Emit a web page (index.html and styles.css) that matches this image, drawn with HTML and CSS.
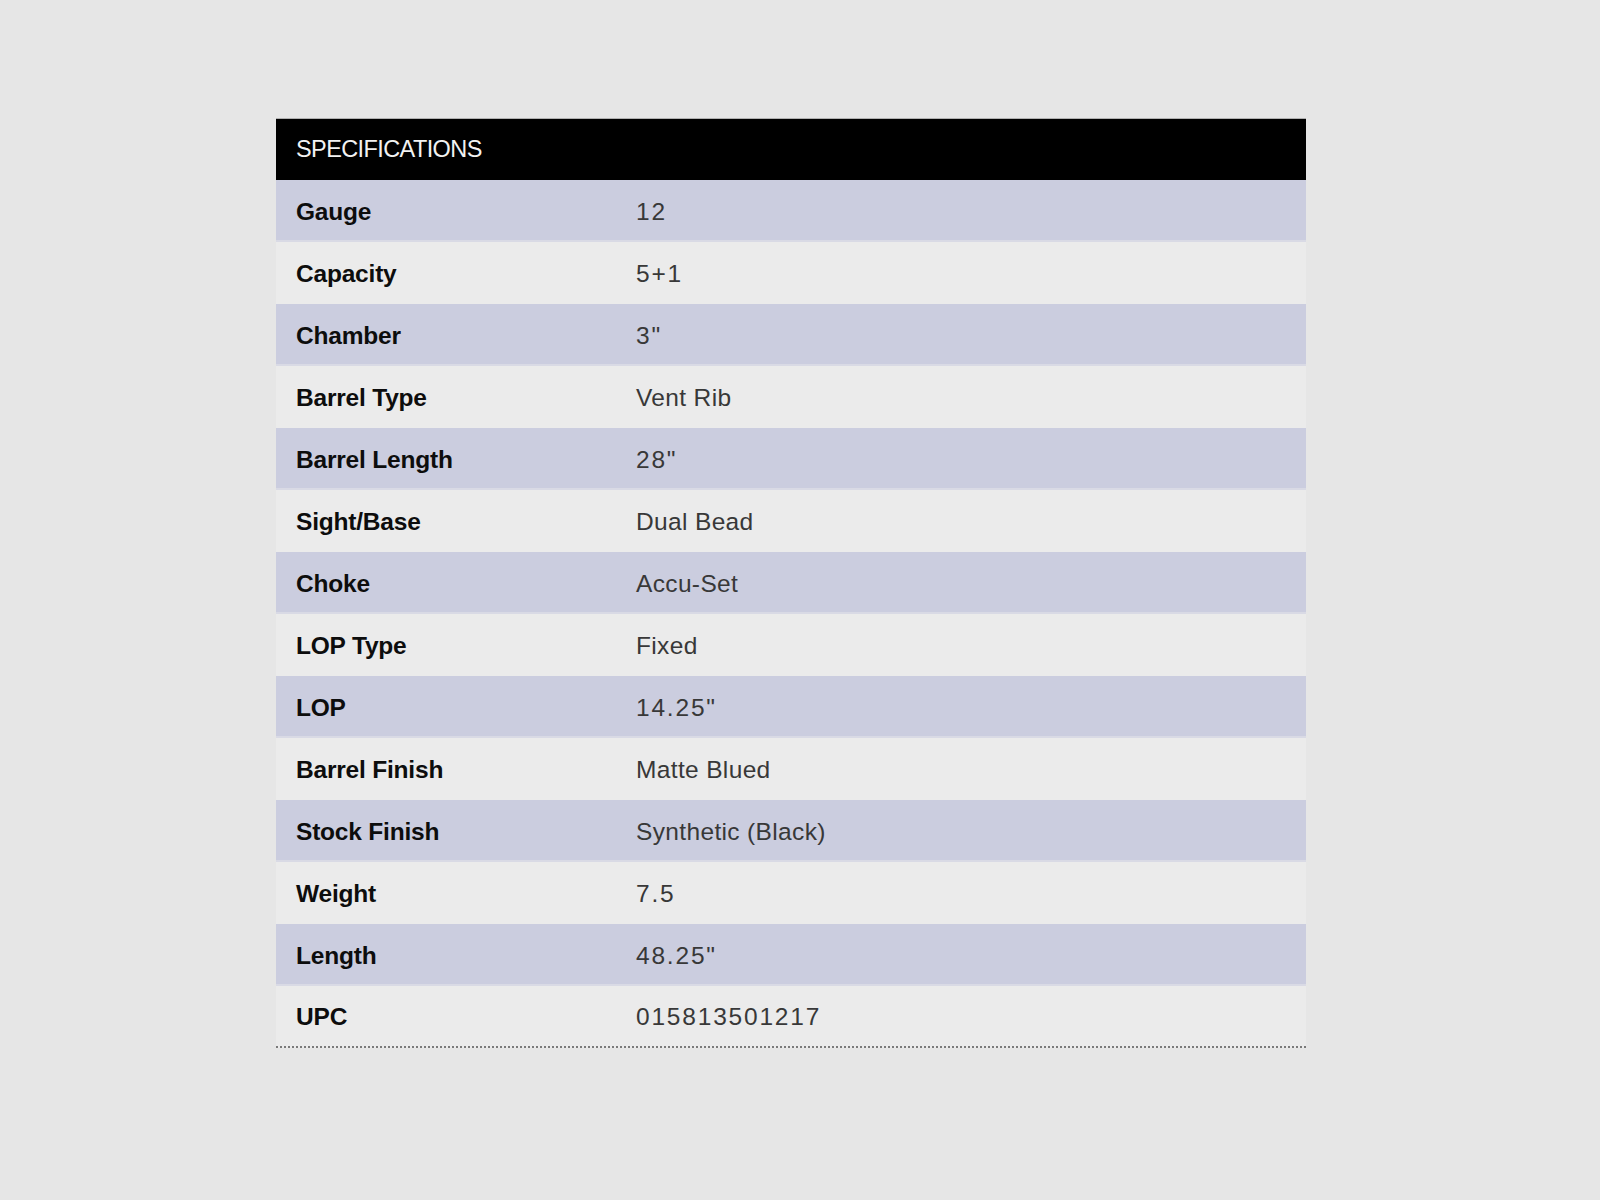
FILE: index.html
```html
<!DOCTYPE html>
<html>
<head>
<meta charset="utf-8">
<link rel="stylesheet" href="styles.css">
</head>
<body>
<div class="page">
  <div class="specs">
    <div class="head">SPECIFICATIONS</div>
    <div class="row odd"><span class="label">Gauge</span><span class="value num">12</span></div>
    <div class="row"><span class="label">Capacity</span><span class="value num">5+1</span></div>
    <div class="row odd"><span class="label">Chamber</span><span class="value num">3"</span></div>
    <div class="row"><span class="label">Barrel Type</span><span class="value">Vent Rib</span></div>
    <div class="row odd"><span class="label">Barrel Length</span><span class="value num">28"</span></div>
    <div class="row"><span class="label">Sight/Base</span><span class="value">Dual Bead</span></div>
    <div class="row odd"><span class="label">Choke</span><span class="value">Accu-Set</span></div>
    <div class="row"><span class="label">LOP Type</span><span class="value">Fixed</span></div>
    <div class="row odd"><span class="label">LOP</span><span class="value num">14.25"</span></div>
    <div class="row"><span class="label">Barrel Finish</span><span class="value">Matte Blued</span></div>
    <div class="row odd"><span class="label">Stock Finish</span><span class="value">Synthetic (Black)</span></div>
    <div class="row"><span class="label">Weight</span><span class="value num">7.5</span></div>
    <div class="row odd"><span class="label">Length</span><span class="value num">48.25"</span></div>
    <div class="row last"><span class="label">UPC</span><span class="value num">015813501217</span></div>
  </div>
</div>
</body>
</html>
```
FILE: styles.css
```css
html, body {
  margin: 0;
  padding: 0;
  background: #e6e6e6;
}
.page {
  width: 1600px;
  height: 1200px;
  padding-top: 118px;
  padding-left: 276px;
  box-sizing: border-box;
}
.specs {
  width: 1030px;
  font-family: "Liberation Sans", Arial, sans-serif;
}
.head {
  height: 62px;
  background: #000;
  color: #f2f2f2;
  font-size: 23.5px;
  letter-spacing: -0.6px;
  display: flex;
  align-items: center;
  padding-left: 20px;
  border-top: 1px solid #b0b0b0;
  box-sizing: border-box;
}
.row {
  height: 62px;
  display: flex;
  align-items: center;
  background: #ebebeb;
  box-sizing: border-box;
  padding-top: 2px;
}
.row.odd {
  background: #cbcddf;
  box-shadow: inset 0 -2px 0 #d9dae5;
}
.row.last {
  border-bottom: 2px dotted #7a7a7a;
}
.label {
  width: 360px;
  padding-left: 20px;
  box-sizing: border-box;
  font-weight: bold;
  font-size: 24.5px;
  color: #0d0d0d;
  letter-spacing: -0.2px;
}
.value {
  font-size: 24.5px;
  color: #383838;
  letter-spacing: 0.35px;
}
.value.num {
  letter-spacing: 1.8px;
}
```
